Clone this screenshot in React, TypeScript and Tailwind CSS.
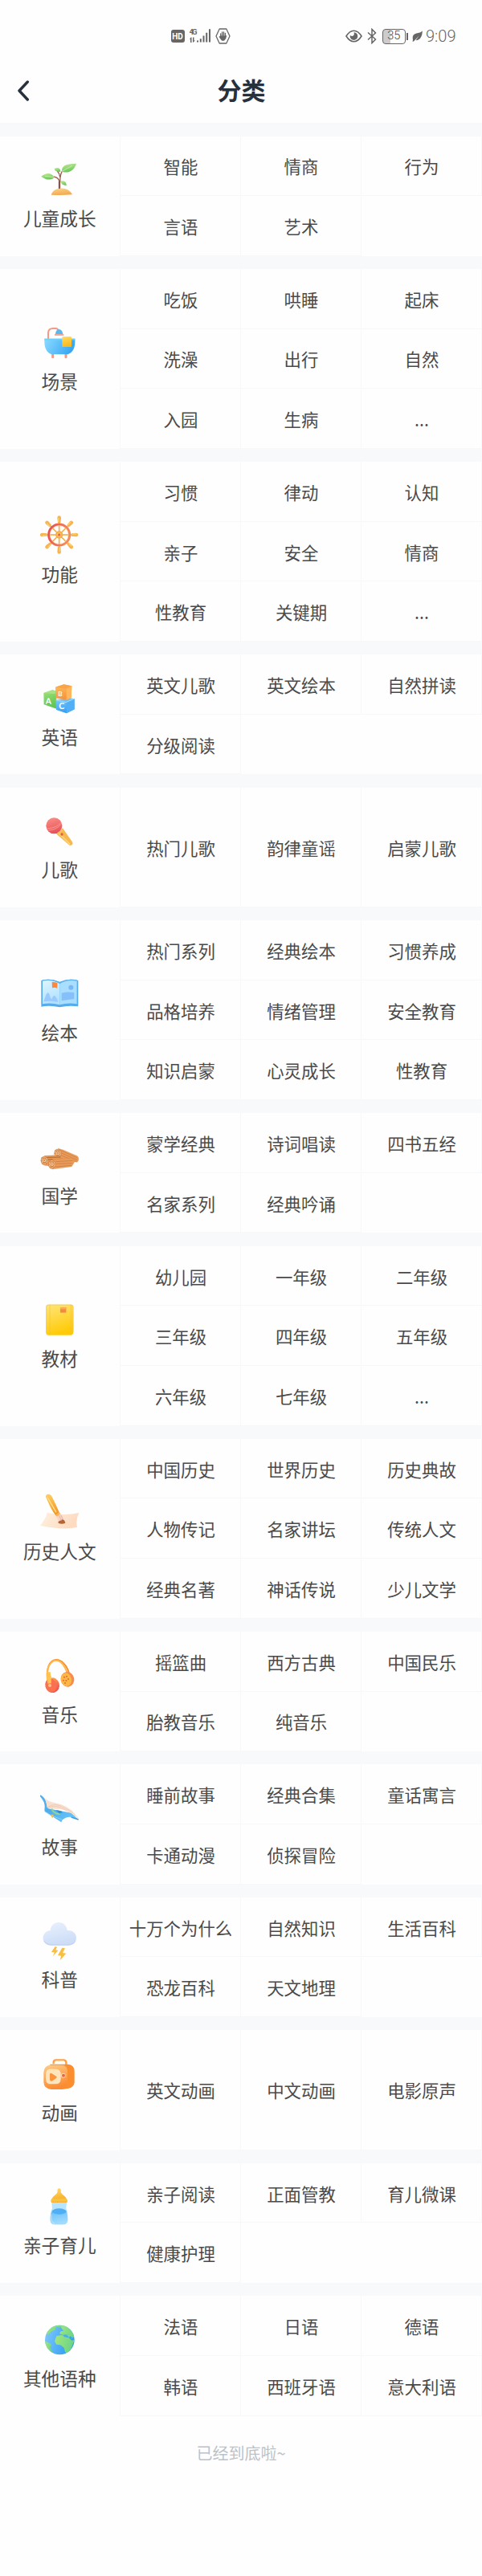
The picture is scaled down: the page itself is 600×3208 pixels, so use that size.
import type { ReactNode } from 'react';

type Category = {
  name: string;
  icon: ReactNode;
  items: string[];
};

function Grad({ id, from, to, h }: { id: string; from: string; to: string; h?: boolean }) {
  return (
    <linearGradient id={id} x1="0" y1="0" x2={h ? 1 : 0.3} y2={h ? 0.3 : 1}>
      <stop offset="0" stopColor={from} />
      <stop offset="1" stopColor={to} />
    </linearGradient>
  );
}

function Icon({ children }: { children: ReactNode }) {
  return <svg className="size-12 shrink-0 overflow-visible" viewBox="0 0 144 144" fill="none">{children}</svg>;
}

const Sprout = (
  <Icon>
    <Grad id="leaf" from="#c3eb96" to="#6cc75c" />
    <Grad id="soil" from="#fbd486" to="#f3ab52" />
    <path d="M72 112C75 90 74 78 66 70C61 65 56 64 50 63M74 84C74 64 76 50 84 40M74 65C73 55 70 48 64 42" stroke="#95604f" strokeWidth="4" />
    <path d="M72 80V112" stroke="#8b5145" strokeWidth="7" />
    <path d="M81 44C79 17 106 15 135 14C128 37 109 53 81 44Z" fill="url(#leaf)" />
    <path d="M76 44C61 47 54 41 53 33C67 26 76 32 76 44Z" fill="url(#leaf)" />
    <path d="M53 66C37 80 17 73 4 62C24 46 43 48 53 66Z" fill="url(#leaf)" />
    <path d="M78 79C94 77 98 86 98 96C84 95 77 91 78 79Z" fill="url(#leaf)" />
    <path d="M81 43L120 22M52 65L18 61" stroke="#e2f5bd" strokeWidth="2" />
    <path d="M41 131C46 115 59 107 75 107C95 105 112 114 120 130Q80 133 41 131Z" fill="url(#soil)" />
  </Icon>
);

const Bathtub = (
  <Icon>
    <Grad id="tub" from="#8bdcff" to="#3aa7f3" h />
    <Grad id="towel" from="#ffdc64" to="#f9b91d" />
    <path d="M30 62V37Q31 21 48 21H58Q66 22 68 29" stroke="#f49a83" strokeWidth="6" />
    <path d="M57 43C58 29 64 25 71 25C79 25 84 33 85 43Z" fill="#5bb8ef" />
    <path d="M54 45H88" stroke="#f39b87" strokeWidth="5" />
    <path d="M47 112V128M96 112V128" stroke="#f39a86" strokeWidth="9" strokeLinecap="round" />
    <path d="M16 59H130V74C129 102 115 118 94 118H52C30 118 17 101 16 74Z" fill="url(#tub)" />
    <path d="M16 62H130" stroke="#6fd0fb" strokeWidth="5" />
    <rect x="82" y="52" width="35" height="38" rx="3" fill="url(#towel)" />
  </Icon>
);

const SPOKES = [0, 45, 90, 135, 180, 225, 270, 315];

const Wheel = (
  <Icon>
    <Grad id="rim" from="#e84b4d" to="#f58a58" h />
    {SPOKES.map(a => (
      <g key={a} transform={`rotate(${a} 71 72)`}>
        <path d="M71 72V26" stroke="#f6b04b" strokeWidth="5" />
        <path d="M66 27L64 10Q64 1 71 1Q78 1 78 10L76 27Z" fill="#f7b54d" />
        <path d="M68 24V9" stroke="#fcd887" strokeWidth="3" />
      </g>
    ))}
    <circle cx="71" cy="72" r="39" stroke="url(#rim)" strokeWidth="9" />
    <circle cx="71" cy="72" r="34" stroke="#ffd3a2" strokeWidth="1.5" />
    <circle cx="71" cy="72" r="14" fill="#f5ae48" />
    <circle cx="71" cy="72" r="8" fill="#fbd066" />
    <circle cx="71" cy="72" r="5" fill="#ea6748" />
  </Icon>
);

const Blocks = (
  <Icon>
    <Grad id="green" from="#a1e279" to="#60c653" />
    <Grad id="orange" from="#ffc063" to="#f4943e" />
    <Grad id="blue" from="#83ceff" to="#369ff0" />
    <path d="M13 54L46 43L61 47V113L14 97Z" fill="url(#green)" />
    <path d="M13 54L46 43L61 47L54 58Z" fill="#a9e187" />
    <path d="M58 80L96 73L128 75V115L98 130L60 117Z" fill="url(#blue)" />
    <path d="M98 88L128 75V115L98 130Z" fill="#50aff5" />
    <path d="M59 80L96 89L128 75" stroke="#acdfff" strokeWidth="3" />
    <path d="M57 32L88 22L118 28L116 73L99 80L58 73Z" fill="url(#orange)" />
    <path d="M57 32L88 22L118 28L98 38Z" fill="#faa449" />
    <path d="M98 38L118 28L116 72L98 80Z" fill="#ffb75b" />
    <text x="20" y="94" transform="skewY(4) translate(0 -1)" fill="white" fontSize="31" fontWeight="700" fontFamily="Lato">A</text>
    <text x="67" y="65" fill="white" fontSize="24" fontWeight="700" fontFamily="Lato">B</text>
    <text x="70" y="113" fill="white" fontSize="32" fontWeight="700" fontFamily="Lato">C</text>
  </Icon>
);

const Mic = (
  <Icon>
    <Grad id="mic" from="#fb9386" to="#e8525d" />
    <path d="M61 86L84 64L121 117Q123 130 110 128Z" fill="#f7b84f" />
    <path d="M70 83L111 124" stroke="#fbd37a" strokeWidth="5" />
    <circle cx="52" cy="55" r="30" fill="url(#mic)" />
    <path d="M25 66Q63 63 78 43M31 72Q62 70 77 50" stroke="#ffb5a0" strokeWidth="2" />
    <circle cx="81" cy="87" r="5" fill="#dd6139" />
    <path d="M66 84Q77 81 82 69" stroke="#ffc05c" strokeWidth="7" />
  </Icon>
);

const PictureBook = (
  <Icon>
    <Grad id="page" from="#dff6ff" to="#b2e1ff" />
    <path d="M4 24Q40 14 73 29Q106 14 142 24V121Q106 116 73 124Q38 116 4 122Z" fill="#56aceb" />
    <path d="M9 21Q45 17 73 34V115Q40 106 9 112Z" fill="url(#page)" />
    <path d="M137 21Q102 17 73 34V115Q105 106 137 112Z" fill="#a9defe" />
    <path d="M8 24Q45 17 73 34Q102 17 137 24" stroke="#62b2ed" strokeWidth="4" />
    <path d="M13 103C20 85 22 72 29 70C37 72 36 91 44 94C50 72 59 80 67 105Q39 98 13 103Z" fill="#99caff" />
    <circle cx="115" cy="50" r="9" fill="#78b8f8" />
    <path d="M80 71Q101 65 127 69V93Q104 95 80 100Z" fill="#86c0fa" />
    <path d="M44 30Q55 29 64 33V53L54 50L45 52Z" fill="#ff873d" />
  </Icon>
);

function Roll({ d, cx, cy }: { d: string; cx: number; cy: number }) {
  return (
    <g>
      <path d={d} fill="#e99b57" stroke="#d58a4b" strokeWidth="1" />
      <ellipse cx={cx} cy={cy} rx="14" ry="17" fill="#d4854a" />
      <ellipse cx={cx} cy={cy} rx="10" ry="13" stroke="#f8cd9c" strokeWidth="3" strokeDasharray="9 3" />
      <path d={`M${cx - 4} ${cy + 5}q-4 -11 5 -11q6 4 2 10q-4 2 -4 -3`} stroke="#fbdcb2" strokeWidth="3" />
    </g>
  );
}

const Bamboo = (
  <Icon>
    <Roll d="M67 43L85 48L139 71Q149 83 138 94L62 77Z" cx={66} cy={61} />
    <path d="M79 51L139 78M80 60L138 86M77 68L136 92" stroke="#ca7943" strokeWidth="2" />
    <Roll d="M16 70L56 68L91 85L31 108L14 105Z" cx={16} cy={88} />
    <path d="M26 76L76 75M29 84L82 82" stroke="#a86136" strokeWidth="3" />
    <Roll d="M46 82L120 80L130 90L118 110L45 120Z" cx={44} cy={102} />
    <path d="M58 92L122 88M60 100L119 98M58 111L116 106" stroke="#c77742" strokeWidth="2" />
  </Icon>
);

const Textbook = (
  <Icon>
    <Grad id="cover" from="#ffe57a" to="#ffcb08" />
    <path d="M22 24Q22 17 29 17H117Q124 17 124 24V120Q124 131 113 131H29Q22 131 22 124Z" fill="url(#cover)" />
    <path d="M36 18V130M115 18V130" stroke="#ebbd2e" strokeWidth="1.5" />
    <path d="M23 124V27Q23 18 31 18H116Q123 19 123 26V119" stroke="#edc346" strokeWidth="2" />
    <path d="M75 27H97V47H75Z" fill="#f58942" />
    <path d="M75 27H97V34H75Z" fill="#f9ad51" />
  </Icon>
);

const Brush = (
  <Icon>
    <Grad id="paper" from="#fff1df" to="#fddac0" h />
    <Grad id="handle" from="#ffd163" to="#f19b2b" />
    <path d="M26 74Q88 88 145 75Q132 103 138 129Q82 140 0 122Q21 98 26 74Z" fill="url(#paper)" />
    <path d="M22 18C16 5 36 -1 43 13C54 34 63 54 71 73L59 86C43 66 32 41 22 18Z" fill="url(#handle)" />
    <path d="M27 17L60 73" stroke="#ffe08b" strokeWidth="4" />
    <path d="M59 82L71 72L76 79L62 91Z" fill="#ffb15b" />
    <path d="M62 90L76 79Q90 91 88 108L71 115Q66 102 62 90Z" fill="#f7d4c5" />
    <path d="M68 113C65 104 77 107 81 100Q91 99 94 113Q80 119 68 113Z" fill="#b76435" />
    <path d="M71 85L80 105M77 83L86 102" stroke="#dfa694" strokeWidth="2" />
  </Icon>
);

const Headphones = (
  <Icon>
    <Grad id="cup" from="#ffb34f" to="#f35353" />
    <path d="M30 96C22 60 29 27 50 17C79 8 101 39 109 68" stroke="#f58e31" strokeWidth="6" />
    <path d="M27 92C23 57 29 31 50 19C77 10 94 42 102 67" stroke="#ffb64b" strokeWidth="6" />
    <path d="M27 60L38 61L42 98L24 102Z" fill="#ffc44f" />
    <ellipse cx="46" cy="110" rx="26" ry="28" transform="rotate(-15 46 110)" fill="url(#cup)" />
    <ellipse cx="40" cy="111" rx="21" ry="26" transform="rotate(-15 40 111)" fill="#f9714f" />
    <path d="M24 76H41V103L28 104Z" fill="#ffc451" />
    <circle cx="36" cy="111" r="6" fill="#ffbf8c" />
    <ellipse cx="102" cy="88" rx="25" ry="28" transform="rotate(-12 102 88)" fill="#f58b50" />
    <ellipse cx="97" cy="89" rx="20" ry="25" transform="rotate(-10 97 89)" fill="#fbb748" />
    <path d="M90 80h.1M99 77h.1M87 92h.1M97 93h.1M105 87h.1M93 102h.1" stroke="#e56d2f" strokeWidth="6" strokeLinecap="round" />
  </Icon>
);

const StoryBook = (
  <Icon>
    <Grad id="storyblue" from="#4ba8eb" to="#66c4fb" h />
    <path d="M17 73L53 80L116 92L143 117L118 108Q99 104 82 119L79 127L18 88Z" fill="url(#storyblue)" />
    <path d="M0 25Q16 32 21 49Q25 65 29 74L16 86Q20 61 12 48Q7 39 0 31Z" fill="#50b0ef" />
    <path d="M8 28Q24 49 49 53Q103 62 133 98Q97 79 70 78Q45 78 25 71Q27 48 8 28Z" fill="#f8dfcf" />
    <path d="M27 71Q56 50 93 75Q116 83 142 111M29 73Q61 60 88 79Q111 88 132 104" stroke="#eac0a2" strokeWidth="2" />
    <path d="M43 76Q49 95 74 97" stroke="#8dd496" strokeWidth="6" />
    <path d="M58 82Q76 82 84 90L71 94Z" fill="#2e8bd4" />
    <path d="M17 86L43 103L82 117" stroke="#a9dcf8" strokeWidth="2" />
    <path d="M43 97L51 101L47 111L40 104Z" fill="#f7bf53" />
    <path d="M116 108L143 117" stroke="#3e9dde" strokeWidth="4" />
  </Icon>
);

const Thunder = (
  <Icon>
    <Grad id="cloud" from="#e9f1fe" to="#cdddf7" />
    <path d="M41 92C23 92 11 81 11 65C11 49 22 38 38 37C39 17 53 6 69 6C87 6 99 18 101 36C121 34 135 47 135 64C135 82 122 92 104 92Z" fill="url(#cloud)" />
    <path d="M15 76Q23 89 42 90H104Q124 89 131 76" stroke="#bdd0f2" strokeWidth="3" />
    <path d="M56 96L42 117L53 118L48 132L67 111L58 109L63 98Z" fill="#f9bd43" />
    <path d="M82 101L66 129L78 131L74 148L97 122L84 120L93 103Z" fill="#f9bd43" />
  </Icon>
);

const Projector = (
  <Icon>
    <Grad id="box" from="#ffcc88" to="#fb8c32" />
    <path d="M50 37V29Q51 22 60 22H88Q97 23 97 32V39" stroke="#fca046" strokeWidth="7" />
    <path d="M54 32Q56 25 63 25H88" stroke="#ffd6a1" strokeWidth="3" />
    <path d="M36 38H103Q128 40 128 64V106Q127 125 104 129L73 132Z" fill="#fb8f30" />
    <path d="M38 41H80Q102 41 102 65V109Q101 132 80 132H41Q14 129 13 105V68Q15 43 38 41Z" fill="url(#box)" />
    <path d="M34 56H59Q77 57 77 76V93Q76 112 59 112H36Q22 110 21 93V74Q22 58 34 56Z" fill="#ffe5bd" />
    <path d="M36 75Q37 69 44 73L60 83Q65 86 60 90L44 101Q37 103 36 96Z" fill="#fb943c" />
    <circle cx="86" cy="80" r="9" fill="#ffd5a7" />
    <circle cx="87" cy="80" r="6" fill="#ed6248" />
  </Icon>
);

const Bottle = (
  <Icon>
    <Grad id="nipple" from="#ffdc73" to="#f8b52f" />
    <Grad id="milk" from="#6abefa" to="#a0dcff" />
    <path d="M43 61H99L97 82Q104 96 103 125Q103 142 84 142H56Q37 142 38 125Q37 96 45 82Z" fill="#b7e4fe" />
    <path d="M45 91H97Q103 104 103 125Q101 142 84 142H56Q39 142 38 125Q37 104 45 91Z" fill="url(#milk)" />
    <ellipse cx="71" cy="93" rx="27" ry="11" fill="#50aef4" />
    <path d="M43 48C45 36 61 31 65 20C63 10 67 7 71 7C76 7 79 12 77 20C81 31 97 36 99 48Z" fill="url(#nipple)" />
    <rect x="40" y="46" width="62" height="15" rx="6" fill="#fac143" />
    <path d="M43 58H99" stroke="#eda534" strokeWidth="4" strokeDasharray="3 2" />
    <path d="M42 104V125Q43 137 55 138" stroke="#d2f1ff" strokeWidth="2" />
  </Icon>
);

const Globe = (
  <Icon>
    <Grad id="sea" from="#83c9ff" to="#319def" h />
    <Grad id="land" from="#a5e77b" to="#6bd587" h />
    <clipPath id="earth"><circle cx="73" cy="75" r="55" /></clipPath>
    <circle cx="73" cy="75" r="55" fill="url(#sea)" />
    <g clipPath="url(#earth)" fill="url(#land)">
      <path d="M76 25L91 18L112 31L132 62L119 66L113 61L108 66L101 60L99 55L88 57L72 51L77 43L87 41L81 33Z" />
      <path d="M61 60L82 56L91 64L108 67L118 77L128 74L119 98L112 115L99 124L93 120L89 104L76 94L61 92L54 80Z" />
      <path d="M17 80L34 86L43 94L36 104L42 111L48 128L21 117Z" />
      <path d="M22 51L40 26L62 18L84 20L72 29L61 26L55 38L43 42L31 54Z" />
    </g>
    <path d="M88 52L94 57L105 57M117 71L124 65" stroke="#5ab8e7" strokeWidth="3" />
  </Icon>
);

const CATEGORIES: Category[] = [
  { name: '儿童成长', icon: Sprout, items: ['智能', '情商', '行为', '言语', '艺术'] },
  { name: '场景', icon: Bathtub, items: ['吃饭', '哄睡', '起床', '洗澡', '出行', '自然', '入园', '生病', '...'] },
  { name: '功能', icon: Wheel, items: ['习惯', '律动', '认知', '亲子', '安全', '情商', '性教育', '关键期', '...'] },
  { name: '英语', icon: Blocks, items: ['英文儿歌', '英文绘本', '自然拼读', '分级阅读'] },
  { name: '儿歌', icon: Mic, items: ['热门儿歌', '韵律童谣', '启蒙儿歌'] },
  { name: '绘本', icon: PictureBook, items: ['热门系列', '经典绘本', '习惯养成', '品格培养', '情绪管理', '安全教育', '知识启蒙', '心灵成长', '性教育'] },
  { name: '国学', icon: Bamboo, items: ['蒙学经典', '诗词唱读', '四书五经', '名家系列', '经典吟诵'] },
  { name: '教材', icon: Textbook, items: ['幼儿园', '一年级', '二年级', '三年级', '四年级', '五年级', '六年级', '七年级', '...'] },
  { name: '历史人文', icon: Brush, items: ['中国历史', '世界历史', '历史典故', '人物传记', '名家讲坛', '传统人文', '经典名著', '神话传说', '少儿文学'] },
  { name: '音乐', icon: Headphones, items: ['摇篮曲', '西方古典', '中国民乐', '胎教音乐', '纯音乐'] },
  { name: '故事', icon: StoryBook, items: ['睡前故事', '经典合集', '童话寓言', '卡通动漫', '侦探冒险'] },
  { name: '科普', icon: Thunder, items: ['十万个为什么', '自然知识', '生活百科', '恐龙百科', '天文地理'] },
  { name: '动画', icon: Projector, items: ['英文动画', '中文动画', '电影原声'] },
  { name: '亲子育儿', icon: Bottle, items: ['亲子阅读', '正面管教', '育儿微课', '健康护理'] },
  { name: '其他语种', icon: Globe, items: ['法语', '日语', '德语', '韩语', '西班牙语', '意大利语'] },
];

function StatusBar() {
  return (
    <div className="flex h-[90px] items-center pr-[32.5px] pl-[212.5px] text-[#666]">
      <div className="flex h-4 w-[17px] items-center justify-center rounded-[3px] bg-[#666] font-['Roboto'] text-[10px] font-bold text-white">HD</div>
      <svg className="ml-1.5 h-5 w-7" viewBox="0 0 28 20" fill="currentColor">
        <text x="-0.5" y="8" fontSize="9.5" fontWeight="700" fontFamily="Roboto" textLength="10">4G</text>
        <path d="M1.6 11.5L0 14H1V18H2.5V11.5ZM4 11.5H5.5V15.5H7L4 18ZM9 15.5h2v2H9ZM12.8 13.2h2v4.3h-2ZM16.5 9.5h2v8h-2ZM20.2 5.7h2v11.8h-2ZM24 1.3h2v16.2h-2Z" />
      </svg>
      <svg className="ml-1 h-5 w-[19px]" viewBox="0 0 19 20" fill="none" stroke="currentColor">
        <path d="M5.2 1H13.8L18 10L13.8 19H5.2L1 10Z" strokeWidth="1.3" strokeLinejoin="round" />
        <path d="M6.7 11V6.8M8.6 10V4.8M10.5 10V4.8M12.4 11V6.3" strokeWidth="1.3" strokeLinecap="round" />
        <path d="M6.1 9.5H13L14.3 9Q14 13 11 15.7H8.2Q6 13.5 4.6 10.8Z" fill="currentColor" stroke="none" />
      </svg>
      <svg className="ml-auto h-4 w-[21px]" viewBox="0 0 21 16" fill="none" stroke="currentColor" strokeWidth="1.6">
        <path d="M1 8Q5.3 1.2 10.5 1.2Q15.7 1.2 20 8Q15.7 14.8 10.5 14.8Q5.3 14.8 1 8Z" />
        <path d="M10.5 3.3A4.8 4.8 0 1 1 5.8 7Q9 9 10.5 6.8Q11.3 5 10.5 3.3Z" fill="currentColor" stroke="none" />
      </svg>
      <svg className="ml-1.5 h-5 w-3" viewBox="0 0 12 20" fill="none" stroke="currentColor" strokeWidth="1.5">
        <path d="M1 5.5L10.5 14L6 18.6V1.4L10.5 6L1 14.5" />
      </svg>
      <div className="ml-[7px] flex h-[19px] w-[29.5px] items-center justify-center rounded-[4px] border-[1.5px] border-[#666] bg-linear-to-r from-[#ccc] from-35% to-transparent to-35% font-['Roboto'] text-[14.5px] font-light text-[#444]">35</div>
      <div className="ml-[1px] h-[9px] w-0.5 bg-[#666]" />
      <svg className="ml-[5px] h-[14px] w-[13px]" viewBox="0 0 13 14" fill="currentColor">
        <path d="M1 11.5C-.5 5 4 3.5 8 3Q10.5 2.5 12.8 .5C12.8 7 10 12.3 4.5 12.2L8.8 6.2L2 13.5L.5 13.8Z" />
      </svg>
      <span className="ml-1 font-['Roboto'] text-[20px] leading-none font-light">9:09</span>
    </div>
  );
}

function CategoryCard({ category }: { category: Category }) {
  return (
    <section className="flex min-h-[149.2px] bg-[#fefefe]">
      <div className="flex w-[149.5px] shrink-0 flex-col items-center justify-center gap-2.5 border-r border-[#f7f8fa] pb-0.5">
        {category.icon}
        <span className="text-[22.7px] leading-[30px]">{category.name}</span>
      </div>
      <div className="grid w-[450px] shrink-0 auto-rows-[minmax(74.6px,1fr)] grid-cols-3">
        {category.items.map((item, i) => (
          <a key={i} className="flex items-center justify-center border-r border-b border-[#f7f8fa] pt-0.5 pl-[2px] text-[21.4px] leading-[30px] whitespace-nowrap">
            {item}
          </a>
        ))}
      </div>
    </section>
  );
}

export default function App() {
  return (
    <div className="h-[3208px] w-[600px] overflow-hidden bg-[#fefefe] font-['Noto_Sans_CJK_SC',sans-serif] text-[#4a4a4a]">
      <StatusBar />
      <header className="mb-[18.3px] flex h-[45px] items-center text-[#27313d]">
        <svg className="ml-[21px] h-[26px] w-4" viewBox="0 0 16 26" fill="none" stroke="currentColor" strokeWidth="3.4" strokeLinecap="round" strokeLinejoin="round">
          <path d="M13.3 2L3 13L13.3 24" />
        </svg>
        <h1 className="flex-1 pr-[36px] pb-[3px] text-center text-[30px] leading-[42px] font-bold">分类</h1>
      </header>
      <main className="flex flex-col gap-[16.3px] bg-[#f7f9fb] pt-[16.3px]">
        {CATEGORIES.map(c => <CategoryCard key={c.name} category={c} />)}
      </main>
      <p className="pt-[31px] text-center text-[20px] leading-[30px] text-[#bcc2c9]">已经到底啦~</p>
    </div>
  );
}
